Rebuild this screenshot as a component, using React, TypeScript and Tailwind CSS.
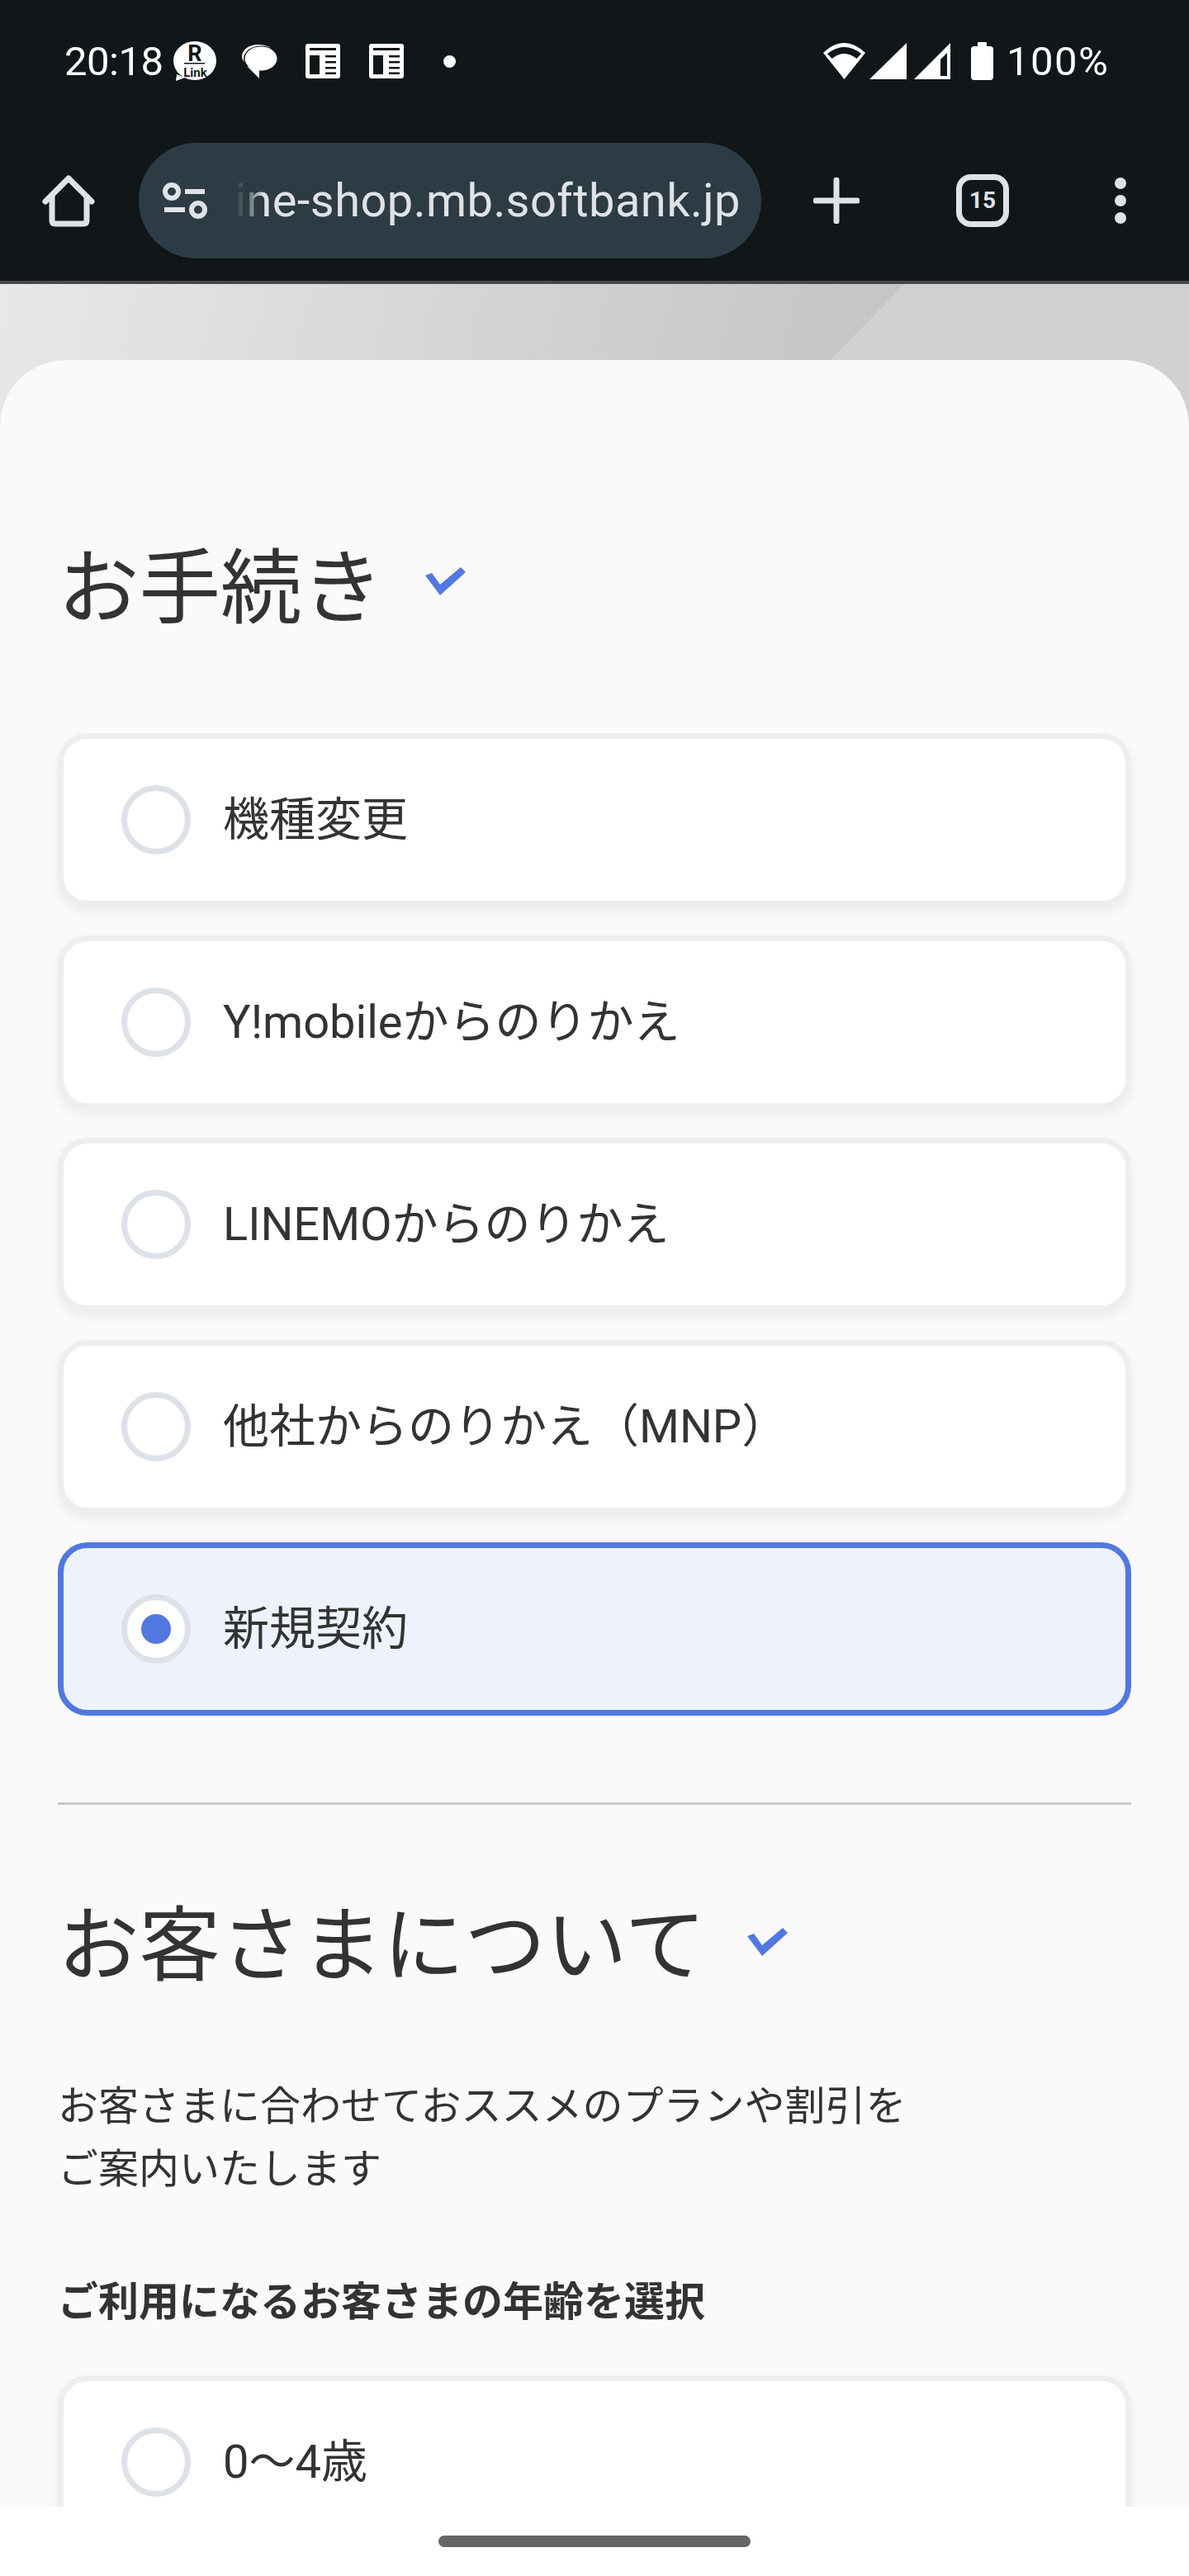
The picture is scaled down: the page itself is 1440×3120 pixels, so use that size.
import React from "react";

const jp = "[font-family:'Roboto','Noto_Sans_CJK_JP',sans-serif]";

const Check = ({ className }: { className: string }) => (
  <svg viewBox="0 0 49 34" className={`w-[49px] h-[34px] shrink-0 fill-[#5178e0] ${className}`}>
    <polygon points="0,10 8,7 18,21 43,0 49,6 18,34" />
  </svg>
);

const NewsIcon = ({ className = "" }: { className?: string }) => (
  <svg viewBox="0 0 42 42" className={`w-[42px] h-[42px] shrink-0 ${className}`}>
    <rect width="42" height="42" rx="3" fill="#fff" />
    <g fill="#111619">
      <rect x="5" y="5" width="32" height="3" />
      <rect x="5" y="14" width="12" height="23" />
      <rect x="24" y="14" width="13" height="2.5" />
      <rect x="24" y="21" width="13" height="2.5" />
      <rect x="24" y="28" width="13" height="2.5" />
      <rect x="24" y="34.5" width="13" height="2.5" />
    </g>
  </svg>
);

const StatusBar = () => (
  <div className="h-[146px] flex items-center pt-[2px] text-white font-['Roboto',sans-serif] text-[49px]">
    <span className="ml-[78px] w-[132px] leading-none tracking-[-0.5px]">20:18</span>
    <svg viewBox="0 0 52 48" className="w-[52px] h-[48px] shrink-0 overflow-visible">
      <ellipse cx="26" cy="23.5" rx="26" ry="23.5" fill="#fff" />
      <polygon points="4,40 3,48 14,44" fill="#fff" />
      <text x="26" y="24" textAnchor="middle" fontFamily="Roboto" fontWeight="700" fontSize="27" fill="#111619">R</text>
      <rect x="13" y="26" width="25" height="1.5" fill="#111619" />
      <text x="26.5" y="43" textAnchor="middle" fontFamily="Roboto" fontWeight="700" fontSize="15" fill="#111619">Link</text>
    </svg>
    <svg viewBox="0 0 43 41" className="ml-[31px] w-[43px] h-[41px] shrink-0">
      <ellipse cx="20" cy="14" rx="20" ry="14" fill="#fff" />
      <ellipse cx="23" cy="17" rx="21" ry="15.5" fill="#111619" />
      <ellipse cx="23" cy="17" rx="19.5" ry="14.5" fill="#fff" />
      <polygon points="6,26 21,41 21,30" fill="#fff" />
    </svg>
    <NewsIcon className="ml-[34px]" />
    <NewsIcon className="ml-[35px]" />
    <span className="ml-[48px] w-[15px] h-[15px] rounded-full bg-white" />
    <div className="flex-1" />
    <svg viewBox="0 0 56 48" className="w-[56px] h-[48px] shrink-0">
      <path
        fillRule="evenodd"
        fill="#fff"
        d="M2 14 Q27.5 -10 53 14 L27.5 46Z M7 15 Q27.5 -1 48 15 L42.5 21 Q27.5 9 12.5 21Z"
      />
    </svg>
    <svg viewBox="0 0 45 44" className="ml-[2px] w-[45px] h-[44px] shrink-0">
      <polygon points="0,44 45,0 45,44" fill="#fff" />
    </svg>
    <svg viewBox="0 0 44 44" className="ml-[9px] w-[44px] h-[44px] shrink-0">
      <path fillRule="evenodd" fill="#fff" d="M0 44 L44 0 V44Z M40 12 V40 H32 V20Z" />
    </svg>
    <svg viewBox="0 0 27 46" className="ml-[25px] w-[27px] h-[46px] shrink-0">
      <rect x="8" width="11" height="8" rx="1" fill="#fff" />
      <rect y="5" width="27" height="41" rx="4" fill="#fff" />
    </svg>
    <span className="ml-[16px] mr-[100px] w-[121px] leading-none tracking-[1.5px] whitespace-nowrap">100%</span>
  </div>
);

const Toolbar = () => (
  <div className="h-[194px] box-content border-b-[4px] border-[#45494c] flex items-center">
    <svg viewBox="0 0 66 64" fill="none" stroke="#dfe2e6" strokeWidth="7" strokeLinecap="round" strokeLinejoin="round" className="ml-[50px] w-[66px] h-[64px] shrink-0">
      <path d="M5 33 L33 5 L61 33" />
      <path d="M13 27 V56 Q13 60 17 60 H51 Q55 60 55 56 V27" />
    </svg>
    <div className="ml-[52px] w-[754px] h-[140px] rounded-[70px] bg-[#2d3c44] flex items-center">
      <svg viewBox="0 0 54 44" fill="none" stroke="#dfe2e6" strokeWidth="6" className="ml-[29px] w-[54px] h-[44px] shrink-0">
        <circle cx="11" cy="11" r="8" />
        <path d="M27 11 H51" />
        <circle cx="43" cy="33" r="8" />
        <path d="M2 33 H27" />
      </svg>
      <div className="relative ml-[32px] w-[614px] h-[80px] flex items-center justify-end">
        <span className="font-['Roboto',sans-serif] text-[56px] leading-none tracking-[0.45px] text-[#dfe2e6] whitespace-nowrap">
          ine-shop.mb.softbank.jp
        </span>
        <div className="absolute left-0 top-0 h-full w-[36px] bg-gradient-to-r from-[#2d3c44] via-[#2d3c44]/70 to-transparent" />
      </div>
    </div>
    <svg viewBox="0 0 56 56" fill="none" stroke="#dfe2e6" strokeWidth="7" strokeLinecap="round" className="ml-[63px] w-[56px] h-[56px] shrink-0">
      <path d="M28 3 V53 M3 28 H53" />
    </svg>
    <div className="ml-[117px] w-[64px] h-[64px] shrink-0 rounded-[18px] border-[7px] border-[#dfe2e6] flex items-center justify-center font-['Roboto',sans-serif] font-bold text-[28px] text-[#dfe2e6] leading-none">
      15
    </div>
    <div className="ml-[128px] flex flex-col gap-[7px]">
      <span className="w-[14px] h-[14px] rounded-full bg-[#dfe2e6]" />
      <span className="w-[14px] h-[14px] rounded-full bg-[#dfe2e6]" />
      <span className="w-[14px] h-[14px] rounded-full bg-[#dfe2e6]" />
    </div>
  </div>
);

const Option = ({ label, selected = false }: { label: string; selected?: boolean }) => (
  <div
    className={`h-[210px] shrink-0 rounded-[36px] border-[7px] flex items-center pl-[70px] ${
      selected
        ? "border-[#5178e0] bg-[#edf2fd]"
        : "border-[#eeeeee] bg-white shadow-[0_7px_14px_rgba(0,0,0,0.06)]"
    }`}
  >
    <span className="w-[84px] h-[84px] shrink-0 rounded-full border-[7px] border-[#dde2e9] bg-white flex items-center justify-center">
      {selected && <span className="w-[36px] h-[36px] rounded-full bg-[#5178e0]" />}
    </span>
    <span className="ml-[39px] text-[56px] leading-[70px] text-[#333333]">{label}</span>
  </div>
);

export default function App() {
  return (
    <div className={`w-[1440px] h-[3120px] flex flex-col overflow-hidden bg-white ${jp}`}>
      <div className="bg-[#111619]">
        <StatusBar />
        <Toolbar />
      </div>
      <div className="relative h-[2692px] overflow-hidden bg-[linear-gradient(105deg,#e8e8e8_0,#c6c6c6_1000px)]">
        <div className="absolute left-0 top-0 w-full h-[172px] bg-[#d1d1d1] [clip-path:polygon(1096px_0,926px_172px,1440px_172px,1440px_0)]" />
        <div className="relative mt-[92px] rounded-t-[80px] bg-[#fafafa] h-[2600px] px-[70px] pt-[230px]">
          <div className="flex items-center h-[96px]">
            <h1 className="text-[98.5px] leading-[96px] text-[#333333]">お手続き</h1>
            <Check className="ml-[51px] mb-[20px]" />
          </div>
          <div className="mt-[126px] flex flex-col gap-[35px]">
            <Option label="機種変更" />
            <Option label="Y!mobileからのりかえ" />
            <Option label="LINEMOからのりかえ" />
            <Option label="他社からのりかえ（MNP）" />
            <Option label="新規契約" selected />
          </div>
          <div className="mt-[105px] h-[3px] bg-[#c8c8c8]" />
          <div className="mt-[124px] flex items-center h-[96px]">
            <h2 className="text-[98.5px] leading-[96px] text-[#333333]">お客さまについて</h2>
            <Check className="ml-[50px] mb-[12px]" />
          </div>
          <p className="mt-[108px] text-[49px] leading-[76px] text-[#333333]">
            お客さまに合わせておススメのプランや割引を
            <br />
            ご案内いたします
          </p>
          <p className="mt-[85px] text-[49px] leading-[76px] font-bold text-[#333333]">
            ご利用になるお客さまの年齢を選択
          </p>
          <div className="mt-[50px]">
            <Option label="0〜4歳" />
          </div>
        </div>
      </div>
      <div className="relative z-10 h-[84px] shrink-0 bg-white flex justify-center pt-[35px]">
        <span className="w-[378px] h-[14px] rounded-[7px] bg-[#666666]" />
      </div>
    </div>
  );
}
